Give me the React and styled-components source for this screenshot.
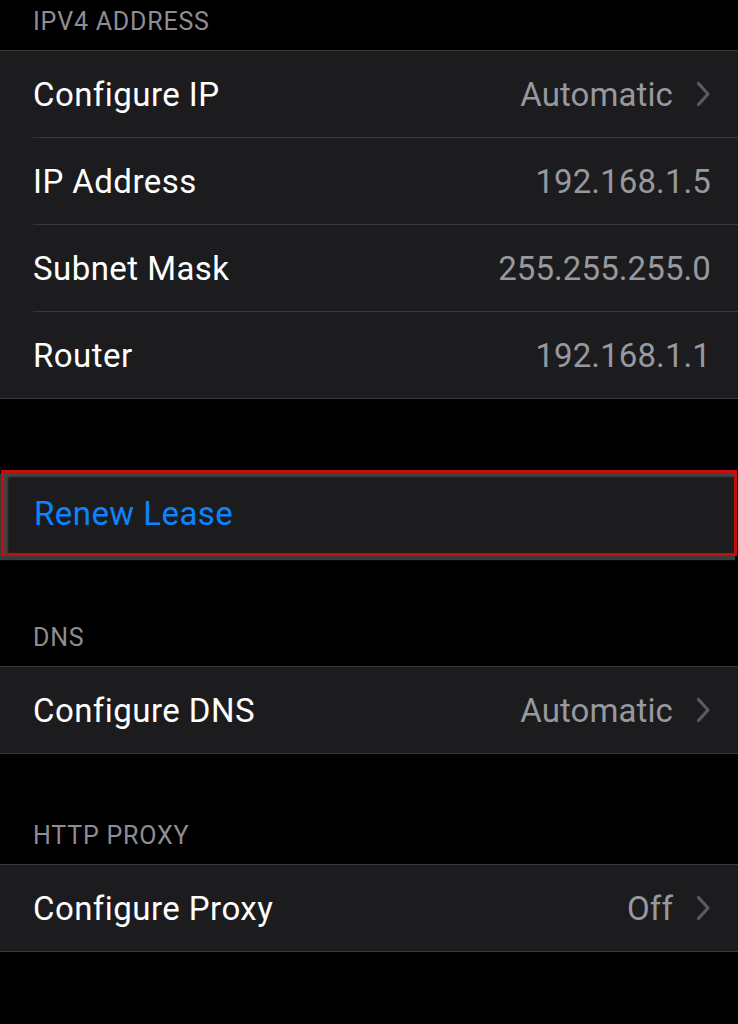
import React from "react";
import styled, { createGlobalStyle } from "styled-components";

const GlobalStyle = createGlobalStyle`
  html, body {
    margin: 0;
    padding: 0;
    background: #000;
  }
  body {
    font-family: Roboto, "Liberation Sans", sans-serif;
    -webkit-font-smoothing: antialiased;
  }
`;

const Page = styled.div`
  width: 738px;
  min-height: 1024px;
  background: #000;
  overflow: hidden;
`;

const SectionHeader = styled.div`
  height: ${({ tall }) => (tall ? "110px" : "50px")};
  box-sizing: border-box;
  display: flex;
  align-items: flex-end;
  padding: 0 33px 16px;
  color: #8d8d93;
  font-size: 25px;
  line-height: 25px;
  letter-spacing: 0.8px;
  text-transform: uppercase;
`;

const Spacer = styled.div`
  height: ${({ size }) => size}px;
`;

const Group = styled.div`
  background: #1c1c1e;
  border-top: 1px solid #38383a;
  border-bottom: 1px solid #38383a;
`;

const HighlightGroup = styled.div`
  background: #1c1c1e;
  height: 86px;
  box-sizing: border-box;
  border: 3px solid #c40d0d;
  margin: 0 1px;
  box-shadow: inset 4px 4px 2px rgba(80, 80, 82, 0.75),
    -2px 4px 1px #3a3a3c;
`;

const Row = styled.div`
  height: ${({ last }) => (last ? "86px" : "87px")};
  padding-left: 33px;
  box-sizing: border-box;
  display: flex;
`;

const RowInner = styled.div`
  flex: 1;
  display: flex;
  align-items: center;
  padding-right: 27px;
  border-bottom: ${({ last }) => (last ? "none" : "1px solid #38383a")};
`;

const Label = styled.span`
  flex: 1;
  color: ${({ action }) => (action ? "#0a84ff" : "#ffffff")};
  font-size: 33px;
  letter-spacing: 0.45px;
`;

const Value = styled.span`
  color: #98989f;
  font-size: 33px;
  letter-spacing: 0.1px;
`;

const Chevron = styled.svg`
  width: 15px;
  height: 26px;
  margin-left: 23px;
  flex-shrink: 0;
`;

const ActionRow = styled.div`
  height: 100%;
  display: flex;
  align-items: center;
  padding-left: 30px;
`;

const ChevronIcon = () => (
  <Chevron viewBox="0 0 15 26">
    <path
      d="M2.5 2.5 L12 13 L2.5 23.5"
      fill="none"
      stroke="#5b5b60"
      strokeWidth="3.2"
      strokeLinecap="round"
      strokeLinejoin="round"
    />
  </Chevron>
);

const SettingRow = ({ label, value, chevron, last }) => (
  <Row last={last}>
    <RowInner last={last}>
      <Label>{label}</Label>
      <Value>{value}</Value>
      {chevron && <ChevronIcon />}
    </RowInner>
  </Row>
);

const ipRows = [
  { label: "Configure IP", value: "Automatic", chevron: true },
  { label: "IP Address", value: "192.168.1.5" },
  { label: "Subnet Mask", value: "255.255.255.0" },
  { label: "Router", value: "192.168.1.1" },
];

export default function App() {
  return (
    <Page>
      <GlobalStyle />
      <SectionHeader>IPv4 Address</SectionHeader>
      <Group>
        {ipRows.map((r, i) => (
          <SettingRow key={r.label} {...r} last={i === ipRows.length - 1} />
        ))}
      </Group>

      <Spacer size={71} />
      <HighlightGroup>
        <ActionRow>
          <Label action>Renew Lease</Label>
        </ActionRow>
      </HighlightGroup>

      <SectionHeader tall>DNS</SectionHeader>
      <Group>
        <SettingRow label="Configure DNS" value="Automatic" chevron last />
      </Group>

      <SectionHeader tall>HTTP Proxy</SectionHeader>
      <Group>
        <SettingRow label="Configure Proxy" value="Off" chevron last />
      </Group>
    </Page>
  );
}
